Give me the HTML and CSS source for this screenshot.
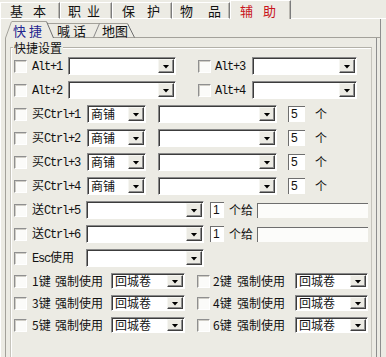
FILE: index.html
```html
<!DOCTYPE html>
<html>
<head>
<meta charset="utf-8">
<link rel="stylesheet" href="styles.css">
</head>
<body>
<div class="toptabs">
  <div class="ttab t1"><span>基</span><span>本</span></div>
  <div class="ttab t2"><span>职</span><span>业</span></div>
  <div class="ttab t3"><span>保</span><span>护</span></div>
  <div class="ttab t4"><span>物</span><span>品</span></div>
  <div class="ttab t5 sel"><span>辅</span><span>助</span></div>
  <div class="tfill"></div>
</div>
<div class="panel">
  <div class="subtabs">
    <svg class="edge" width="7" height="19"><polyline points="0.5,19 6.5,2.5" fill="none" stroke="#a3a19a" stroke-width="1"/></svg>
    <div class="stab sel">快 捷</div>
    <svg class="edge" width="8" height="19"><polyline points="1,4.5 8,4.5" fill="none" stroke="#a3a19a"/><polyline points="7,18.5 8,18.5" fill="none" stroke="#a3a19a"/><polyline points="0.5,2.5 7.5,19" fill="none" stroke="#6e6e6e"/></svg>
    <div class="stab s2">喊 话</div>
    <svg class="edge" width="7" height="19"><polyline points="0,4.5 7,4.5" fill="none" stroke="#a3a19a"/><polyline points="0,18.5 7,18.5" fill="none" stroke="#a3a19a"/><polyline points="0.5,18.5 6.5,4.5" fill="none" stroke="#8a8a8a"/></svg>
    <div class="stab s3">地图</div>
    <svg class="edge" width="8" height="19"><polyline points="0,18.5 8,18.5" fill="none" stroke="#a3a19a"/><polyline points="0.5,4.5 7.5,18.5" fill="none" stroke="#6e6e6e"/></svg>
    <div class="sfill"></div>
  </div>
  <div class="subpanel">
    <div class="group">
      <div class="legend">快捷设置</div>
      <div class="rows">
        <div class="row">
          <span class="cb"></span>
          <span class="lbl w36"><span class="mono">Alt+1</span></span>
          <div class="combo w108"><span class="val"></span><span class="btn"></span></div>
          <span class="cb ml22"></span>
          <span class="lbl ml4 w37"><span class="mono">Alt+3</span></span>
          <div class="combo w105"><span class="val"></span><span class="btn"></span></div>
        </div>
        <div class="row">
          <span class="cb"></span>
          <span class="lbl w36"><span class="mono">Alt+2</span></span>
          <div class="combo w108"><span class="val"></span><span class="btn"></span></div>
          <span class="cb ml22"></span>
          <span class="lbl ml4 w37"><span class="mono">Alt+4</span></span>
          <div class="combo w105"><span class="val"></span><span class="btn"></span></div>
        </div>
        <div class="row">
          <span class="cb"></span>
          <span class="lbl w55">买<span class="mono">Ctrl+1</span></span>
          <div class="combo w59"><span class="val">商铺</span><span class="btn"></span></div>
          <div class="combo w119 ml12"><span class="val"></span><span class="btn"></span></div>
          <span class="num w17 ml11">5</span>
          <span class="unit">个</span>
        </div>
        <div class="row">
          <span class="cb"></span>
          <span class="lbl w55">买<span class="mono">Ctrl+2</span></span>
          <div class="combo w59"><span class="val">商铺</span><span class="btn"></span></div>
          <div class="combo w119 ml12"><span class="val"></span><span class="btn"></span></div>
          <span class="num w17 ml11">5</span>
          <span class="unit">个</span>
        </div>
        <div class="row">
          <span class="cb"></span>
          <span class="lbl w55">买<span class="mono">Ctrl+3</span></span>
          <div class="combo w59"><span class="val">商铺</span><span class="btn"></span></div>
          <div class="combo w119 ml12"><span class="val"></span><span class="btn"></span></div>
          <span class="num w17 ml11">5</span>
          <span class="unit">个</span>
        </div>
        <div class="row">
          <span class="cb"></span>
          <span class="lbl w55">买<span class="mono">Ctrl+4</span></span>
          <div class="combo w59"><span class="val">商铺</span><span class="btn"></span></div>
          <div class="combo w119 ml12"><span class="val"></span><span class="btn"></span></div>
          <span class="num w17 ml11">5</span>
          <span class="unit">个</span>
        </div>
        <div class="row">
          <span class="cb"></span>
          <span class="lbl w54">送<span class="mono">Ctrl+5</span></span>
          <div class="combo w118"><span class="val"></span><span class="btn"></span></div>
          <span class="num w14 ml6">1</span>
          <span class="give">个给</span>
          <span class="field w111"></span>
        </div>
        <div class="row">
          <span class="cb"></span>
          <span class="lbl w54">送<span class="mono">Ctrl+6</span></span>
          <div class="combo w118"><span class="val"></span><span class="btn"></span></div>
          <span class="num w14 ml6">1</span>
          <span class="give">个给</span>
          <span class="field w111"></span>
        </div>
        <div class="row">
          <span class="cb"></span>
          <span class="lbl w54"><span class="mono">Esc</span>使用</span>
          <div class="combo w118"><span class="val"></span><span class="btn"></span></div>
        </div>
        <div class="row small">
          <span class="cb"></span>
          <span class="lbl w23">1键</span>
          <span class="lbl ml0 w56">强制使用</span>
          <div class="combo w74"><span class="val">回城卷</span><span class="btn"></span></div>
          <span class="cb ml12"></span>
          <span class="lbl ml3 w24">2键</span>
          <span class="lbl ml0 w58">强制使用</span>
          <div class="combo w73"><span class="val">回城卷</span><span class="btn"></span></div>
        </div>
        <div class="row small">
          <span class="cb"></span>
          <span class="lbl w23">3键</span>
          <span class="lbl ml0 w56">强制使用</span>
          <div class="combo w74"><span class="val">回城卷</span><span class="btn"></span></div>
          <span class="cb ml12"></span>
          <span class="lbl ml3 w24">4键</span>
          <span class="lbl ml0 w58">强制使用</span>
          <div class="combo w73"><span class="val">回城卷</span><span class="btn"></span></div>
        </div>
        <div class="row small">
          <span class="cb"></span>
          <span class="lbl w23">5键</span>
          <span class="lbl ml0 w56">强制使用</span>
          <div class="combo w74"><span class="val">回城卷</span><span class="btn"></span></div>
          <span class="cb ml12"></span>
          <span class="lbl ml3 w24">6键</span>
          <span class="lbl ml0 w58">强制使用</span>
          <div class="combo w73"><span class="val">回城卷</span><span class="btn"></span></div>
        </div>
      </div>
    </div>
  </div>
</div>
</body>
</html>
```

FILE: styles.css
```css
html, body {
  margin: 0;
  padding: 0;
}
body {
  width: 386px;
  height: 357px;
  overflow: hidden;
  background: #ecebe4;
  font-family: "Noto Sans CJK SC", "Noto Sans", sans-serif;
  font-size: 12px;
  color: #111;
}

/* top tabs */
.toptabs {
  display: flex;
  height: 19px;
}
.ttab {
  box-sizing: border-box;
  display: flex;
  height: 17px;
  margin-top: 2px;
  border-top: 1px solid #fff;
  border-left: 1px solid #fff;
  border-right: 1px solid #7c7c7c;
  border-bottom: 1px solid #fff;
  box-shadow: inset -1px 0 0 #b9b7b0;
  font-size: 13px;
  line-height: 15px;
  white-space: nowrap;
  flex: none;
}
.t1 { width: 60px; padding-left: 9px; gap: 10px; }
.t2 { width: 52px; padding-left: 7px; gap: 6px; }
.t3 { width: 60px; padding-left: 9px; gap: 12px; }
.t4 { width: 58px; padding-left: 7px; gap: 15px; }
.t5 { width: 61px; padding-left: 9px; gap: 10px; }
.ttab.sel {
  height: 19px;
  margin-top: 0;
  border-bottom: none;
  color: #c8141c;
  padding-top: 2px;
}
.tfill {
  flex: 1;
  border-bottom: 1px solid #fff;
}

/* outer panel */
.panel {
  width: 381px;
  box-sizing: border-box;
  height: 338px;
  border-left: 1px solid #fff;
  border-right: 1px solid #8e8e8e;
  padding-left: 4px;
  padding-right: 2px;
}

/* sub tabs */
.subtabs {
  display: flex;
  height: 19px;
  margin-left: -4px;
  padding-left: 4px;
}
.edge {
  display: block;
  flex: none;
}
.stab {
  box-sizing: border-box;
  flex: none;
  font-size: 13px;
  white-space: nowrap;
}
.stab.sel {
  width: 34px;
  height: 17px;
  margin-top: 2px;
  border-top: 1px solid #a3a19a;
  padding-left: 1px;
  padding-top: 2px;
  line-height: 14px;
  color: #1f2590;
}
.stab.s2, .stab.s3 {
  height: 15px;
  margin-top: 4px;
  border-top: 1px solid #a3a19a;
  border-bottom: 1px solid #a3a19a;
  line-height: 13px;
}
.stab.s2 { width: 39px; padding-left: 3px; }
.stab.s3 { width: 27px; padding-left: 2px; }
.sfill {
  flex: 1;
  border-bottom: 1px solid #a3a19a;
  margin-right: -2px;
}

/* sub panel */
.subpanel {
  width: 372px;
  box-sizing: border-box;
  height: 319px;
  overflow: hidden;
  border-left: 1px solid #a3a19a;
  border-right: 1px solid #8e8e8e;
  padding-top: 9px;
  padding-left: 4px;
}

/* group box */
.group {
  width: 362px;
  height: 320px;
  box-sizing: border-box;
  border: 1px solid #c6c4bc;
  border-top-color: #b3b1a9;
  box-shadow: inset 1px 1px 0 #fff;
  padding-left: 3px;
}
.legend {
  width: max-content;
  height: 13px;
  line-height: 13px;
  margin: -7px 0 0 -1px;
  padding: 0 1px;
  background: #ecebe4;
}
.rows {
  margin-top: 3px;
}
.row {
  display: flex;
  align-items: center;
  height: 18px;
  margin-bottom: 6px;
}
.row.small {
  height: 16px;
}

/* controls */
.cb {
  flex: none;
  width: 13px;
  height: 13px;
  box-sizing: border-box;
  border-top: 1px solid #8f8f8f;
  border-left: 1px solid #8f8f8f;
  border-right: 1px solid #fff;
  border-bottom: 1px solid #fff;
  box-shadow: inset 1px 1px 0 #cfcdc6;
  background: #fbfbf9;
}
.lbl {
  flex: none;
  margin-left: 5px;
  white-space: nowrap;
  line-height: 14px;
}
.mono {
  font-family: "Liberation Mono", "DejaVu Sans Mono", monospace;
  font-size: 12px;
  letter-spacing: -1.2px;
}
.combo {
  flex: none;
  display: flex;
  box-sizing: border-box;
  height: 18px;
  background: #fff;
  border-top: 1px solid #8a8a8a;
  border-left: 1px solid #8a8a8a;
  border-right: 1px solid #fff;
  border-bottom: 1px solid #fff;
  box-shadow: inset 1px 1px 0 #3c3c3c;
  padding: 1px 1px 1px 1px;
}
.row.small .combo {
  height: 16px;
}
.val {
  flex: 1;
  padding-left: 2px;
  line-height: 14px;
  white-space: nowrap;
}
.row.small .val {
  line-height: 12px;
}
.btn {
  flex: none;
  width: 16px;
  box-sizing: border-box;
  background: #ecebe4;
  border-top: 1px solid #f6f6f2;
  border-left: 1px solid #f6f6f2;
  border-right: 1px solid #404040;
  border-bottom: 1px solid #404040;
  box-shadow: inset -1px -1px 0 #8e8e8e;
  display: flex;
  align-items: center;
  justify-content: center;
  padding-top: 1px;
}
.btn::after {
  content: "";
  width: 7px;
  height: 4px;
  background: #000;
  clip-path: polygon(0 0, 100% 0, 50% 100%);
}
.num {
  flex: none;
  box-sizing: border-box;
  height: 16px;
  background: #fff;
  border-top: 1px solid #6e6e6e;
  border-left: 1px solid #6e6e6e;
  padding-left: 2px;
  font-family: "Liberation Sans", sans-serif;
  font-size: 12px;
  line-height: 15px;
}
.unit {
  flex: none;
  margin-left: 10px;
  line-height: 14px;
}
.give {
  flex: none;
  width: 24px;
  margin-left: 5px;
  line-height: 14px;
  white-space: nowrap;
}
.field {
  flex: none;
  box-sizing: border-box;
  height: 15px;
  margin-left: 4px;
  background: #fcfcfa;
  border-top: 1px solid #6e6e6e;
  border-left: 1px solid #6e6e6e;
}

/* sizes */
.w14 { width: 14px; }
.w17 { width: 17px; }
.w23 { width: 23px; }
.w24 { width: 24px; }
.w36 { width: 36px; }
.w37 { width: 37px; }
.w54 { width: 54px; }
.w55 { width: 55px; }
.w56 { width: 56px; }
.w58 { width: 58px; }
.w59 { width: 59px; }
.w73 { width: 73px; }
.w74 { width: 74px; }
.w105 { width: 105px; }
.w108 { width: 108px; }
.w111 { width: 111px; }
.w118 { width: 118px; }
.w119 { width: 119px; }
.ml0 { margin-left: 0; }
.ml3 { margin-left: 3px; }
.ml4 { margin-left: 4px; }
.ml6 { margin-left: 6px; }
.ml11 { margin-left: 11px; }
.ml12 { margin-left: 12px; }
.ml22 { margin-left: 22px; }
```
